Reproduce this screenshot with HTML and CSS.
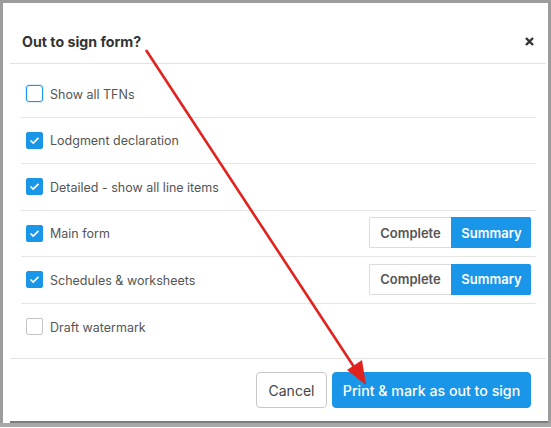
FILE: index.html
```html
<!DOCTYPE html>
<html>
<head>
<meta charset="utf-8">
<link rel="stylesheet" href="styles.css">
</head>
<body>
<div class="screen">
  <div class="modal">
    <div class="header">
      <h1 class="title">Out to sign form?</h1>
      <svg class="close" width="9" height="9" viewBox="0 0 9 9"><path d="M1 1 L8 8 M8 1 L1 8" stroke="#333" stroke-width="2.4" stroke-linecap="butt"/></svg>
    </div>
    <div class="body">
      <div class="row">
        <span class="cb cb-focus"></span><span class="label">Show all TFNs</span>
      </div>
      <div class="row">
        <span class="cb cb-on"><svg width="11" height="9" viewBox="0 0 11 9"><path d="M1.5 4.5 L4.2 7 L9.5 1.8" fill="none" stroke="#fff" stroke-width="1.7"/></svg></span><span class="label">Lodgment declaration</span>
      </div>
      <div class="row">
        <span class="cb cb-on"><svg width="11" height="9" viewBox="0 0 11 9"><path d="M1.5 4.5 L4.2 7 L9.5 1.8" fill="none" stroke="#fff" stroke-width="1.7"/></svg></span><span class="label">Detailed - show all line items</span>
      </div>
      <div class="row">
        <span class="cb cb-on"><svg width="11" height="9" viewBox="0 0 11 9"><path d="M1.5 4.5 L4.2 7 L9.5 1.8" fill="none" stroke="#fff" stroke-width="1.7"/></svg></span><span class="label">Main form</span>
        <div class="seg"><span class="seg-btn">Complete</span><span class="seg-btn seg-active">Summary</span></div>
      </div>
      <div class="row">
        <span class="cb cb-on"><svg width="11" height="9" viewBox="0 0 11 9"><path d="M1.5 4.5 L4.2 7 L9.5 1.8" fill="none" stroke="#fff" stroke-width="1.7"/></svg></span><span class="label">Schedules &amp; worksheets</span>
        <div class="seg"><span class="seg-btn">Complete</span><span class="seg-btn seg-active">Summary</span></div>
      </div>
      <div class="row row-last">
        <span class="cb"></span><span class="label">Draft watermark</span>
      </div>
    </div>
    <div class="footer">
      <button class="btn btn-cancel">Cancel</button>
      <button class="btn btn-primary">Print &amp; mark as out to sign</button>
    </div>
  </div>
  <div class="behind"></div>
  <svg class="arrow" width="551" height="428" viewBox="0 0 551 428">
    <line x1="146" y1="50" x2="356" y2="370" stroke="#e0231f" stroke-width="2.6"/>
    <polygon points="366,385 347,370 362,360" fill="#e0231f"/>
  </svg>
</div>
</body>
</html>
```

FILE: styles.css
```css
* { box-sizing: border-box; }
html, body { margin: 0; padding: 0; }
body {
  width: 551px;
  height: 428px;
  overflow: hidden;
  background: #fff;
  font-family: Inter, "Noto Sans", sans-serif;
}
.screen {
  position: relative;
  width: 551px;
  height: 428px;
  border-top: 3px solid #9c9c9c;
  border-left: 3px solid #9c9c9c;
  border-right: 3px solid #9c9c9c;
  display: flex;
  flex-direction: column;
}
.modal {
  margin-left: 7px;
  width: 536px;
  height: 418px;
  background: #fff;
  display: flex;
  flex-direction: column;
}
.header {
  height: 61px;
  display: flex;
  align-items: center;
  justify-content: space-between;
  padding: 16px 12px 0 12px;
  border-bottom: 1px solid #e3e3e3;
}
.title {
  margin: 0;
  font-size: 14.2px;
  font-weight: 700;
  color: #333;
}
.close { display: block; margin-top: 1px; }
.body {
  padding: 7px 10px 8px 11px;
  border-bottom: 1px solid #e3e3e3;
}
.row {
  height: 46.5px;
  display: flex;
  align-items: center;
  border-bottom: 1px solid #e6e6e6;
  padding-left: 5px;
  padding-right: 5px;
}
.row-last { border-bottom: none; }
.cb {
  width: 17px;
  height: 17px;
  border: 1px solid #c4c4c4;
  border-radius: 2px;
  margin-right: 7px;
  display: flex;
  align-items: center;
  justify-content: center;
  flex: none;
  background: #fff;
}
.cb-focus {
  border: 1.5px solid #1a96e8;
  border-radius: 3px;
  box-shadow: 0 0 0 1px rgba(26,150,232,0.15);
}
.cb-on {
  background: #1a96e8;
  border-color: #1a96e8;
  border-radius: 2px;
}
.cb svg { display: block; }
.label {
  font-size: 12.5px;
  color: #555;
  padding-top: 1px;
}
.seg {
  margin-left: auto;
  display: flex;
  height: 31px;
  margin-top: -1px;
}
.seg-btn {
  display: flex;
  align-items: center;
  justify-content: center;
  font-size: 13px;
  font-weight: 600;
  color: #555;
  border: 1px solid #dcdcdc;
  border-right: none;
  border-radius: 2px 0 0 2px;
  width: 82px;
  height: 31px;
}
.seg-active {
  background: #1a96e8;
  border-color: #1a96e8;
  color: #fff;
  border-radius: 0 2px 2px 0;
  width: 80px;
}
.footer {
  flex: 1;
  display: flex;
  justify-content: flex-end;
  align-items: flex-start;
  padding: 13px 15px 0 0;
  gap: 5px;
}
.btn {
  height: 36px;
  font-family: Inter, "Noto Sans", sans-serif;
  font-size: 14px;
  border-radius: 4px;
  padding: 0;
  cursor: pointer;
}
.btn-cancel {
  width: 71px;
  background: #fff;
  color: #444;
  border: 1px solid #c8c8c8;
}
.btn-primary {
  width: 199px;
  background: #1a96e8;
  color: #fff;
  border: 1px solid #1a96e8;
  font-weight: 500;
  font-size: 14.2px;
}
.behind {
  margin-left: 7px;
  height: 2px;
  background: #7c7c7c;
  flex: none;
}
.screen::after {
  content: "";
  display: block;
  height: 4px;
  margin-left: -3px;
  margin-right: -3px;
  background: #a8a8a8;
  border-bottom: 1px solid #fff;
}
.arrow {
  position: absolute;
  left: -3px;
  top: -3px;
  pointer-events: none;
}
```
